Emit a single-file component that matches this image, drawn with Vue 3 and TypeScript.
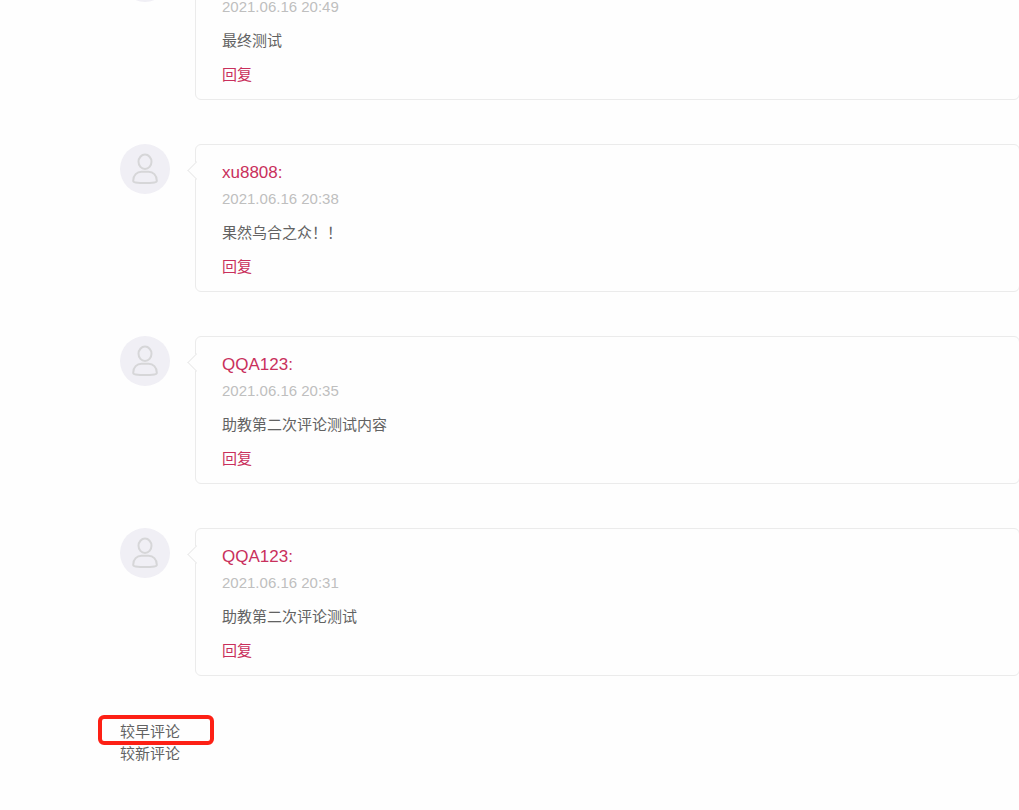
<script setup lang="ts">
interface Comment {
  id: number
  author: string
  time: string
  text: string
}

const comments: Comment[] = [
  { id: 1, author: 'QQA123', time: '2021.06.16 20:49', text: '最终测试' },
  { id: 2, author: 'xu8808', time: '2021.06.16 20:38', text: '果然乌合之众！！' },
  { id: 3, author: 'QQA123', time: '2021.06.16 20:35', text: '助教第二次评论测试内容' },
  { id: 4, author: 'QQA123', time: '2021.06.16 20:31', text: '助教第二次评论测试' },
]
</script>

<template>
  <main class="page">
    <ul class="comments">
      <li v-for="c in comments" :key="c.id" class="comment">
        <svg class="avatar" viewBox="0 0 50 50" aria-hidden="true">
          <circle cx="25" cy="25" r="25" fill="#f0eff5" />
          <g fill="none" stroke="#d6d6d8" stroke-width="2">
            <ellipse cx="25" cy="17.8" rx="6.5" ry="7.2" />
            <path d="M13.2 36.8C13.2 31 17 27.8 21.5 27.8h7c4.5 0 8.3 3.2 8.3 9 0 1.1-.8 1.5-2.300 1.700-5.500.7-13.500.7-19 0-1.500-.2-2.300-.6-2.300-1.700z" />
          </g>
        </svg>
        <article class="bubble">
          <a class="author" href="#">{{ c.author }}:</a>
          <time class="time">{{ c.time }}</time>
          <p class="text">{{ c.text }}</p>
          <a class="reply" href="#">回复</a>
        </article>
      </li>
    </ul>
    <nav class="pager">
      <a class="page-link marked" href="#">较早评论</a>
      <a class="page-link" href="#">较新评论</a>
    </nav>
  </main>
</template>

<style>
body {
  margin: 0;
  background: #fefefe;
}
</style>

<style scoped>
.page {
  overflow: hidden;
  padding-left: 120px;
  font-family: "Liberation Sans", "Noto Sans CJK SC", sans-serif;
  font-size: 15px;
  color: #626262;
}

a {
  color: inherit;
  text-decoration: none;
}

.comments {
  display: flex;
  flex-direction: column;
  gap: 44px;
  margin: -48px -1px 0 0;
  padding: 0;
  list-style: none;
}

.comment {
  display: flex;
  align-items: flex-start;
  gap: 25px;
}

.avatar {
  flex: none;
  width: 50px;
  height: 50px;
}

.bubble {
  position: relative;
  flex: 1;
  display: flex;
  flex-direction: column;
  align-items: flex-start;
  padding: 15px 26px 11px;
  border: 1px solid #ebebeb;
  border-radius: 6px;
}

.bubble::before {
  content: "";
  position: absolute;
  top: 19px;
  left: -6px;
  width: 12px;
  height: 12px;
  border: 1px solid #ebebeb;
  border-width: 0 0 1px 1px;
  background: #fefefe;
  transform: rotate(45deg);
}

.author {
  font-size: 17px;
  line-height: 26px;
  color: #c9305c;
}

.time {
  line-height: 26px;
  color: #bfbfbf;
}

.text {
  margin: 8px 0;
  line-height: 26px;
}

.reply {
  line-height: 26px;
  color: #c9305c;
}

.pager {
  display: flex;
  flex-direction: column;
  align-items: flex-start;
  margin-top: 45px;
}

.page-link {
  position: relative;
  line-height: 22px;
}

.marked::after {
  content: "";
  position: absolute;
  inset: -6px -34px -2px -22px;
  border: 4px solid #fd2015;
  border-radius: 6px;
  pointer-events: none;
}
</style>
